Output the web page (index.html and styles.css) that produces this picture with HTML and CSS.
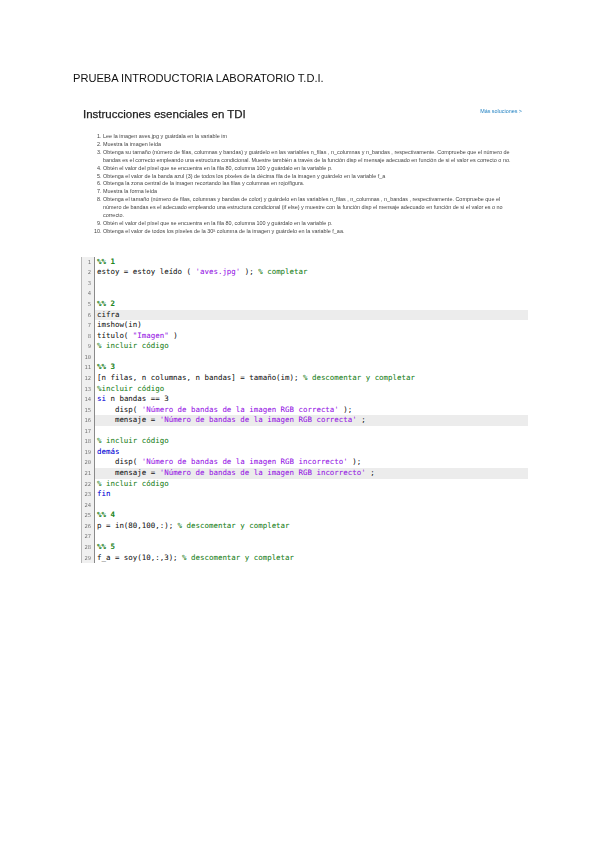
FILE: index.html
```html
<!DOCTYPE html>
<html lang="es">
<head>
<meta charset="utf-8">
<title>Prueba introductoria</title>
<link rel="stylesheet" href="styles.css">
</head>
<body>
<main class="page">
  <h1 class="title">PRUEBA INTRODUCTORIA LABORATORIO T.D.I.</h1>
  <section class="task">
    <header class="task-head">
      <h2 class="task-title">Instrucciones esenciales en TDI</h2>
      <a class="task-link">Más soluciones &gt;</a>
    </header>
    <ol class="steps">
      <li>Lee la imagen aves.jpg y guárdala en la variable im</li>
      <li>Muestra la imagen leída</li>
      <li>Obtenga su tamaño (número de filas, columnas y bandas) y guárdelo en las variables n_filas , n_columnas y n_bandas , respectivamente. Compruebe que el número de bandas es el correcto empleando una estructura condicional. Muestre también a través de la función disp el mensaje adecuado en función de si el valor es correcto o no.</li>
      <li>Obtén el valor del píxel que se encuentra en la fila 80, columna 100 y guárdalo en la variable p.</li>
      <li>Obtenga el valor de la banda azul (3) de todos los píxeles de la décima fila de la imagen y guárdelo en la variable f_a</li>
      <li>Obtenga la zona central de la imagen recortando las filas y columnas en rojo/figura.</li>
      <li>Muestra la forma leída</li>
      <li>Obtenga el tamaño (número de filas, columnas y bandas de color) y guárdelo en las variables n_filas , n_columnas , n_bandas , respectivamente. Compruebe que el número de bandas es el adecuado empleando una estructura condicional (if else) y muestre con la función disp el mensaje adecuado en función de si el valor es o no correcto.</li>
      <li>Obtén el valor del píxel que se encuentra en la fila 80, columna 100 y guárdalo en la variable p.</li>
      <li>Obtenga el valor de todos los píxeles de la 30ª columna de la imagen y guárdelo en la variable f_aa.</li>
    </ol>
  </section>
  <section class="editor">
    <div class="line"><span class="num">1</span><code class="src"><span class="sec">%% 1</span></code></div>
    <div class="line"><span class="num">2</span><code class="src">estoy = estoy leído ( <span class="str">'aves.jpg'</span> ); <span class="cmt">% completar</span></code></div>
    <div class="line"><span class="num">3</span><code class="src"></code></div>
    <div class="line"><span class="num">4</span><code class="src"></code></div>
    <div class="line"><span class="num">5</span><code class="src"><span class="sec">%% 2</span></code></div>
    <div class="line hl"><span class="num">6</span><code class="src">cifra</code></div>
    <div class="line"><span class="num">7</span><code class="src">imshow(in)</code></div>
    <div class="line"><span class="num">8</span><code class="src">título( <span class="str">"Imagen"</span> )</code></div>
    <div class="line"><span class="num">9</span><code class="src"><span class="cmt">% incluir código</span></code></div>
    <div class="line"><span class="num">10</span><code class="src"></code></div>
    <div class="line"><span class="num">11</span><code class="src"><span class="sec">%% 3</span></code></div>
    <div class="line"><span class="num">12</span><code class="src">[n filas, n columnas, n bandas] = tamaño(im); <span class="cmt">% descomentar y completar</span></code></div>
    <div class="line"><span class="num">13</span><code class="src"><span class="cmt">%incluir código</span></code></div>
    <div class="line"><span class="num">14</span><code class="src"><span class="kw">si</span> n bandas == 3</code></div>
    <div class="line"><span class="num">15</span><code class="src">    disp( <span class="str">'Número de bandas de la imagen RGB correcta'</span> );</code></div>
    <div class="line hl"><span class="num">16</span><code class="src">    mensaje = <span class="str">'Número de bandas de la imagen RGB correcta'</span> ;</code></div>
    <div class="line"><span class="num">17</span><code class="src"></code></div>
    <div class="line"><span class="num">18</span><code class="src"><span class="cmt">% incluir código</span></code></div>
    <div class="line"><span class="num">19</span><code class="src"><span class="kw">demás</span></code></div>
    <div class="line"><span class="num">20</span><code class="src">    disp( <span class="str">'Número de bandas de la imagen RGB incorrecto'</span> );</code></div>
    <div class="line hl"><span class="num">21</span><code class="src">    mensaje = <span class="str">'Número de bandas de la imagen RGB incorrecto'</span> ;</code></div>
    <div class="line"><span class="num">22</span><code class="src"><span class="cmt">% incluir código</span></code></div>
    <div class="line"><span class="num">23</span><code class="src"><span class="kw">fin</span></code></div>
    <div class="line"><span class="num">24</span><code class="src"></code></div>
    <div class="line"><span class="num">25</span><code class="src"><span class="sec">%% 4</span></code></div>
    <div class="line"><span class="num">26</span><code class="src">p = in(80,100,:); <span class="cmt">% descomentar y completar</span></code></div>
    <div class="line"><span class="num">27</span><code class="src"></code></div>
    <div class="line"><span class="num">28</span><code class="src"><span class="sec">%% 5</span></code></div>
    <div class="line"><span class="num">29</span><code class="src">f_a = soy(10,:,3); <span class="cmt">% descomentar y completar</span></code></div>
  </section>
</main>
</body>
</html>
```

FILE: styles.css
```css
html, body {
  margin: 0;
  padding: 0;
  background: #fff;
}
.page {
  width: 600px;
  height: 848px;
  padding: 71px 0 0 73px;
  box-sizing: border-box;
  font-family: "Liberation Sans", Arial, sans-serif;
  color: #222;
  overflow: hidden;
}
.title {
  margin: 0;
  font-size: 11.1px;
  line-height: 15px;
  font-weight: 400;
  color: #111;
  filter: blur(0.3px);
}
.task {
  width: 439px;
  margin: 21px 0 0 10px;
}
.task-head {
  display: flex;
  justify-content: space-between;
  align-items: flex-start;
}
.task-title {
  margin: 0;
  font-size: 11.5px;
  line-height: 15px;
  font-weight: 400;
  -webkit-text-stroke: 0.25px #222;
  filter: blur(0.3px);
}
.task-link {
  font-size: 5.4px;
  line-height: 8px;
  color: #1d7fc0;
  filter: blur(0.4px);
}
.steps {
  margin: 11px 0 0;
  padding: 0 10px 0 20px;
  font-size: 5.45px;
  line-height: 7.9px;
  color: #444;
  filter: blur(0.4px);
}
.editor {
  width: 446px;
  margin: 21px 0 0 8px;
  font-family: "DejaVu Sans Mono", monospace;
  font-size: 7.44px;
  border-left: 1px solid #b8b8b8;
}
.line {
  display: flex;
  height: 10.57px;
  line-height: 10.57px;
}
.num {
  flex: 0 0 13px;
  box-sizing: border-box;
  padding-right: 3px;
  text-align: right;
  font-size: 5.5px;
  color: #777;
  background: #f0f0f0;
  border-right: 1px solid #8a8a8a;
  filter: blur(0.3px);
}
.src {
  flex: 1;
  padding-left: 2px;
  font: inherit;
  white-space: pre;
  color: #222;
  text-shadow: 0 0 0.6px rgba(0, 0, 0, 0.2);
}
.hl .src {
  background: #ececec;
}
.cmt, .sec {
  color: #1f8a1f;
}
.sec {
  font-weight: 700;
}
.str {
  color: #a020f0;
}
.kw {
  color: #0000e0;
}
```
